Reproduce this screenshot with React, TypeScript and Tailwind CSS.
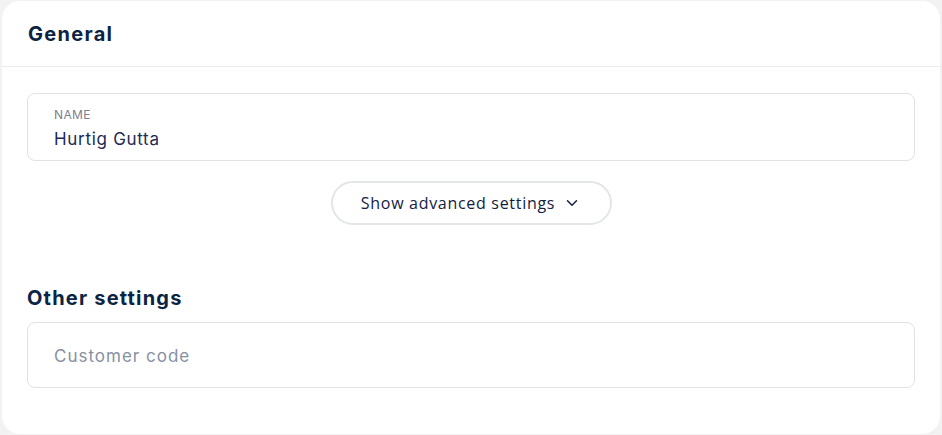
import { ChevronDown } from "lucide-react";

export default function App() {
  return (
    <div className="min-h-[435px] w-[942px] bg-[#f2f2f2] pt-px pl-[2px] pr-[2px] pb-px font-['Inter',sans-serif]">
      <div className="h-[433px] rounded-[18px] bg-white">
        <div className="flex h-[66px] items-center border-b border-[#ebebeb] px-[26px]">
          <h2 className="text-[20px] font-bold tracking-[1.3px] text-[#0c2443]">General</h2>
        </div>

        <div className="px-[25px] pt-[26px]">
          <div className="flex h-[68px] flex-col justify-center rounded-[8px] border border-[#e2e2e2] px-[26px] pt-[3px]">
            <span className="text-[12px] leading-[16px] tracking-[0.4px] uppercase text-[#7b8090]">Name</span>
            <span className="mt-[5px] text-[17px] leading-[22px] tracking-[0.7px] text-[#1c2b54]">Hurtig Gutta</span>
          </div>

          <div className="mt-[20px] flex justify-center">
            <button className="flex h-[44px] w-[281px] items-center justify-center gap-[8px] rounded-full border-2 border-[#e3e6e7] font-['Open_Sans',sans-serif] text-[16px] tracking-[0.7px] text-[#13213f]">
              <span>Show advanced settings</span>
              <ChevronDown className="h-[18px] w-[18px]" strokeWidth={2} />
            </button>
          </div>

          <h2 className="mt-[59px] text-[20px] leading-[28px] font-bold tracking-[1.2px] text-[#0c2443]">Other settings</h2>

          <div className="mt-[10px] flex h-[66px] items-center rounded-[8px] border border-[#e2e2e2] px-[26px] pt-[3px]">
            <span className="text-[17px] tracking-[1px] text-[#8791a2]">Customer code</span>
          </div>
        </div>
      </div>
    </div>
  );
}
